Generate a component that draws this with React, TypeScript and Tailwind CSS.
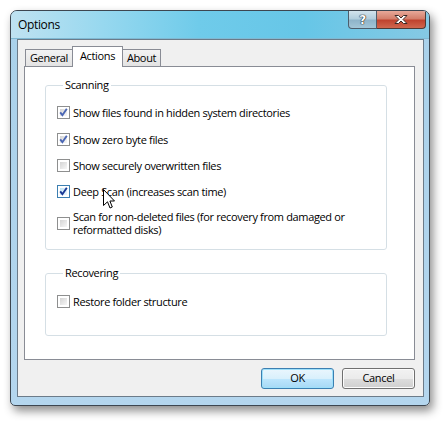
import { FC, ReactNode } from "react";

/* CHECKBOX */

interface CheckBoxProps {
  checked?: boolean;
  hover?: boolean;
}

const CheckBox: FC<CheckBoxProps> = ({ checked, hover }) => {
  return (
    <span
      className={`relative flex-none w-[13px] h-[13px] border bg-white p-[2px] ${
        hover ? "border-[#3c7fb1]" : "border-[#8e8f8f]"
      }`}
    >
      <span
        className={`block w-full h-full ${
          hover
            ? "bg-[linear-gradient(135deg,#bfe3f6,#eef8fd)]"
            : "bg-[linear-gradient(135deg,#d4d4d4,#f7f7f7)]"
        }`}
      />
      {checked ? (
        <svg
          className="absolute left-0 top-0"
          width="11"
          height="11"
          viewBox="0 0 11 11"
        >
          <path
            d="M2.2 5.4 L4.4 8.2 L8.8 1.8"
            fill="none"
            stroke={hover ? "#1b3894" : "#4a66b4"}
            strokeWidth="1.9"
          />
        </svg>
      ) : null}
    </span>
  );
};

/* CHECKBOX ROW */

interface RowProps {
  label: ReactNode;
  checked?: boolean;
  hover?: boolean;
  className?: string;
}

const Row: FC<RowProps> = ({ label, checked, hover, className = "" }) => {
  return (
    <div className={`flex items-center gap-[3px] min-h-[16px] ${className}`}>
      <CheckBox checked={checked} hover={hover} />
      <span className="leading-[13px]">{label}</span>
    </div>
  );
};

/* GROUP BOX */

interface GroupProps {
  title: string;
  className?: string;
  children: ReactNode;
}

const Group: FC<GroupProps> = ({ title, className = "", children }) => {
  return (
    <fieldset
      className={`ml-[20px] w-[342px] border border-[#d5dfe5] rounded-[3px] pl-[11px] ${className}`}
    >
      <legend className="ml-[6px] px-[2px] leading-[14px]">{title}</legend>
      {children}
    </fieldset>
  );
};

/* BUTTON */

interface ButtonProps {
  label: string;
  primary?: boolean;
}

const Button: FC<ButtonProps> = ({ label, primary }) => {
  return (
    <div
      className={`w-[73px] h-[21px] rounded-[3px] border flex items-center justify-center ${
        primary
          ? "border-[#3c7fb1] bg-[linear-gradient(to_bottom,#eaf6fd_0%,#d9f0fc_50%,#bee6fd_51%,#a7d9f5_100%)] shadow-[inset_0_0_0_1px_#9ee0fa]"
          : "border-[#707070] bg-[linear-gradient(to_bottom,#f2f2f2_0%,#ebebeb_50%,#dddddd_51%,#cfcfcf_100%)] shadow-[inset_0_0_0_1px_#fcfcfc]"
      }`}
    >
      {label}
    </div>
  );
};

export default function App() {
  return (
    <div className="relative w-[448px] h-[424px] bg-white pt-[10px] pl-[10px] text-[11px] tracking-[-0.35px] text-black font-['Open_Sans',sans-serif]">
      {/* Window */}
      <div className="w-[420px] h-[396px] flex flex-col rounded-t-[7px] rounded-b-[5px] border border-[#3d4650] bg-[linear-gradient(to_bottom,#a9d1ea,#b4d6ee)] shadow-[3px_5px_10px_rgba(0,0,0,0.45)] overflow-hidden">
        {/* Title bar */}
        <div className="h-[28px] flex items-start bg-[linear-gradient(to_right,#bfe2f1_0%,#97d8ef_22%,#6fcbea_45%,#66c6e7_70%,#86c9e4_100%)] border-b border-b-[#7fb9d3]">
          <span className="self-center pl-[7px] text-[12px]">Options</span>
          <div className="ml-auto mr-[3px] flex h-[18px]">
            <div className="w-[29px] h-full rounded-bl-[4px] border border-t-0 border-[#4d5d6b] bg-[linear-gradient(to_bottom,#d2e3ec_0%,#b2cedd_45%,#8fb4c9_55%,#a3c6d7_100%)] flex items-center justify-center">
              <span className="font-['DejaVu_Sans',sans-serif] font-bold text-[12px] leading-none text-white [text-shadow:0_0_1px_#222,0_0_1px_#222,0_0_1px_#222]">
                ?
              </span>
            </div>
            <div className="w-[49px] h-full rounded-br-[4px] border border-t-0 border-l-0 border-[#4d3a35] bg-[linear-gradient(to_bottom,#e8a999_0%,#d47f6b_45%,#c0432e_55%,#d0674e_100%)] flex items-center justify-center">
              <svg width="14" height="11" viewBox="0 0 14 11">
                <path
                  d="M1 1.5 L4.5 1.5 L7 4 L9.5 1.5 L13 1.5 L9 5.5 L13 9.5 L9.5 9.5 L7 7 L4.5 9.5 L1 9.5 L5 5.5 Z"
                  fill="#ffffff"
                  stroke="#3a2a26"
                  strokeWidth="1"
                  strokeLinejoin="round"
                />
              </svg>
            </div>
          </div>
        </div>

        {/* Client area */}
        <div className="ml-[6px] w-[407px] h-[358px] border border-[#6c7b89] bg-[#f0f0f0] pt-[6px]">
          {/* Tabs */}
          <div className="ml-[7px] h-[20px] flex items-end">
            <div className="w-[47px] h-[17px] border border-r-0 border-b-0 border-[#898c95] bg-[linear-gradient(to_bottom,#f3f3f3,#e3e3e3)] flex items-center justify-center">
              General
            </div>
            <div className="relative z-10 -mb-[1px] w-[51px] h-[21px] border border-b-0 border-[#898c95] bg-white flex items-center justify-center pb-[2px]">
              Actions
            </div>
            <div className="w-[38px] h-[17px] border border-l-0 border-b-0 border-[#898c95] bg-[linear-gradient(to_bottom,#f3f3f3,#e3e3e3)] flex items-center justify-center">
              About
            </div>
          </div>

          {/* Tab panel */}
          <div className="ml-[6px] w-[391px] h-[294px] border border-[#898c95] bg-white pt-[11px]">
            <Group title="Scanning" className="pt-[12px] pb-[13px]">
              <div className="flex flex-col gap-[10px]">
                <Row checked label="Show files found in hidden system directories" />
                <Row checked className="mt-[1px]" label="Show zero byte files" />
                <Row label="Show securely overwritten files" />
                <Row checked hover label="Deep Scan (increases scan time)" />
                <Row
                  className="mt-[1px]"
                  label={
                    <>
                      Scan for non-deleted files (for recovery from damaged or
                      <br />
                      reformatted disks)
                    </>
                  }
                />
              </div>
            </Group>

            <Group title="Recovering" className="mt-[16px] pt-[13px] pb-[26px]">
              <Row label="Restore folder structure" />
            </Group>
          </div>

          {/* Buttons */}
          <div className="ml-[6px] w-[391px] mt-[8px] flex justify-end gap-[8px]">
            <Button label="OK" primary />
            <Button label="Cancel" />
          </div>
        </div>
      </div>

      {/* Mouse pointer */}
      <svg
        className="absolute left-[103px] top-[189px]"
        width="13"
        height="21"
        viewBox="0 0 13 21"
      >
        <path
          d="M0.5 0.5 V16.5 L4.5 12.8 L7 19 L9.3 18 L6.9 12 H11.5 Z"
          fill="#ffffff"
          stroke="#000000"
          strokeWidth="1"
          strokeLinejoin="miter"
        />
      </svg>
    </div>
  );
}
